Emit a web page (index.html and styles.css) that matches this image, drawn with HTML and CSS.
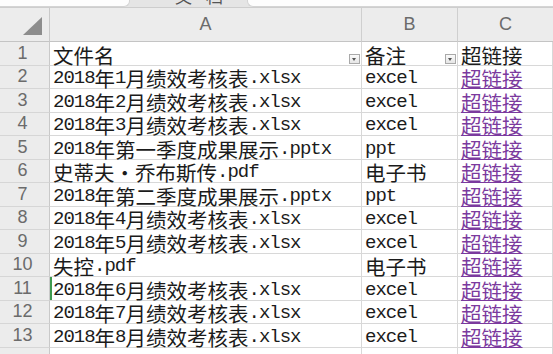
FILE: index.html
```html
<!DOCTYPE html>
<html lang="zh">
<head>
<meta charset="utf-8">
<link rel="stylesheet" href="styles.css">
</head>
<body>
<div class="tabs">
  <div class="tab-left"></div>
  <div class="tab-title">文档</div>
  <div class="tab-right"></div>
</div>
<div class="sheet">
  <div class="corner"><span class="tri"></span></div>
  <div class="colhead">A</div>
  <div class="colhead">B</div>
  <div class="colhead last">C</div>

  <div class="rowhead">1</div>
  <div class="cell">文件名<span class="filter"></span></div>
  <div class="cell">备注<span class="filter"></span></div>
  <div class="cell">超链接</div>

  <div class="rowhead">2</div>
  <div class="cell"><span class="lat">2018</span>年<span class="lat">1</span>月绩效考核表<span class="lat">.xlsx</span></div>
  <div class="cell"><span class="lat">excel</span></div>
  <div class="cell"><a class="link">超链接</a></div>

  <div class="rowhead">3</div>
  <div class="cell"><span class="lat">2018</span>年<span class="lat">2</span>月绩效考核表<span class="lat">.xlsx</span></div>
  <div class="cell"><span class="lat">excel</span></div>
  <div class="cell"><a class="link">超链接</a></div>

  <div class="rowhead">4</div>
  <div class="cell"><span class="lat">2018</span>年<span class="lat">3</span>月绩效考核表<span class="lat">.xlsx</span></div>
  <div class="cell"><span class="lat">excel</span></div>
  <div class="cell"><a class="link">超链接</a></div>

  <div class="rowhead">5</div>
  <div class="cell"><span class="lat">2018</span>年第一季度成果展示<span class="lat">.pptx</span></div>
  <div class="cell"><span class="lat">ppt</span></div>
  <div class="cell"><a class="link">超链接</a></div>

  <div class="rowhead">6</div>
  <div class="cell">史蒂夫・乔布斯传<span class="lat">.pdf</span></div>
  <div class="cell">电子书</div>
  <div class="cell"><a class="link">超链接</a></div>

  <div class="rowhead">7</div>
  <div class="cell"><span class="lat">2018</span>年第二季度成果展示<span class="lat">.pptx</span></div>
  <div class="cell"><span class="lat">ppt</span></div>
  <div class="cell"><a class="link">超链接</a></div>

  <div class="rowhead">8</div>
  <div class="cell"><span class="lat">2018</span>年<span class="lat">4</span>月绩效考核表<span class="lat">.xlsx</span></div>
  <div class="cell"><span class="lat">excel</span></div>
  <div class="cell"><a class="link">超链接</a></div>

  <div class="rowhead">9</div>
  <div class="cell"><span class="lat">2018</span>年<span class="lat">5</span>月绩效考核表<span class="lat">.xlsx</span></div>
  <div class="cell"><span class="lat">excel</span></div>
  <div class="cell"><a class="link">超链接</a></div>

  <div class="rowhead">10</div>
  <div class="cell">失控<span class="lat">.pdf</span></div>
  <div class="cell">电子书</div>
  <div class="cell"><a class="link">超链接</a></div>

  <div class="rowhead">11</div>
  <div class="cell selected"><span class="lat">2018</span>年<span class="lat">6</span>月绩效考核表<span class="lat">.xlsx</span></div>
  <div class="cell"><span class="lat">excel</span></div>
  <div class="cell"><a class="link">超链接</a></div>

  <div class="rowhead">12</div>
  <div class="cell"><span class="lat">2018</span>年<span class="lat">7</span>月绩效考核表<span class="lat">.xlsx</span></div>
  <div class="cell"><span class="lat">excel</span></div>
  <div class="cell"><a class="link">超链接</a></div>

  <div class="rowhead">13</div>
  <div class="cell"><span class="lat">2018</span>年<span class="lat">8</span>月绩效考核表<span class="lat">.xlsx</span></div>
  <div class="cell"><span class="lat">excel</span></div>
  <div class="cell"><a class="link">超链接</a></div>

  <div class="rowhead"></div>
  <div class="cell"></div>
  <div class="cell"></div>
  <div class="cell"></div>
</div>
</body>
</html>
```

FILE: styles.css
```css
html, body {
  margin: 0;
  padding: 0;
  background: #ffffff;
  overflow: hidden;
}
body {
  width: 553px;
  height: 354px;
}
.tabs {
  height: 7px;
  background: #e5e5e5;
  border-bottom: 1px solid #cdcdcd;
  display: flex;
  overflow: hidden;
}
.tab-left {
  width: 130px;
  background: #fdfdfd;
  border-bottom-right-radius: 6px;
  border-right: 1px solid #d4d4d4;
  border-bottom: 1px solid #d4d4d4;
  box-sizing: border-box;
}
.tab-title {
  width: 117px;
  font-family: "Noto Sans CJK SC", sans-serif;
  font-size: 17px;
  line-height: 17px;
  letter-spacing: 14px;
  color: #555;
  padding-left: 45px;
  box-sizing: border-box;
  margin-top: -13px;
  white-space: nowrap;
}
.tab-right {
  flex: 1;
  background: #fdfdfd;
  border-left: 1px solid #d4d4d4;
  border-bottom: 1px solid #d4d4d4;
  border-bottom-left-radius: 6px;
}
.sheet {
  display: grid;
  grid-template-columns: 50px 312px 96px 1fr;
  grid-template-rows: 34px repeat(14, 23.5px);
}
.corner {
  background: #ececec;
  border-right: 1px solid #c9c9c9;
  border-bottom: 1px solid #c4c4c4;
  position: relative;
}
.tri {
  position: absolute;
  left: 23px;
  top: 9px;
  width: 0;
  height: 0;
  border-left: 19px solid transparent;
  border-bottom: 18px solid #8d8d8d;
}
.colhead {
  background: #ececec;
  border-right: 1px solid #cfcfcf;
  border-bottom: 1px solid #c4c4c4;
  display: flex;
  align-items: center;
  justify-content: center;
  font-family: "Liberation Sans", Arial, sans-serif;
  font-size: 18px;
  color: #6b6b6b;
}
.colhead.last {
  border-right: none;
}
.rowhead {
  background: #ececec;
  border-right: 1px solid #c9c9c9;
  border-bottom: 1px solid #d6d6d6;
  display: flex;
  align-items: center;
  justify-content: center;
  padding-right: 4px;
  font-family: "Liberation Sans", Arial, sans-serif;
  font-size: 18px;
  color: #6b6b6b;
  box-sizing: border-box;
}
.cell {
  border-right: 1px solid #d8d8d8;
  border-bottom: 1px solid #d8d8d8;
  display: flex;
  align-items: center;
  padding-left: 3px;
  padding-top: 3px;
  font-family: "Noto Sans CJK SC", sans-serif;
  font-size: 20.5px;
  line-height: 20px;
  color: #1b1b1b;
  white-space: nowrap;
  box-sizing: border-box;
  min-width: 0;
}
.lat {
  font-family: "Liberation Mono", monospace;
  font-size: 19px;
  letter-spacing: -1px;
}
.cell.selected {
  box-shadow: inset 2px 0 0 #3f9a4f;
}
.filter {
  margin-left: auto;
  margin-right: 1px;
  align-self: flex-end;
  margin-bottom: 1px;
  width: 9px;
  height: 8px;
  border: 1px solid #a9a9a9;
  background: #f4f4f4 linear-gradient(#fafafa, #e6e6e6);
  position: relative;
  flex: none;
}
.filter::after {
  content: "";
  position: absolute;
  left: 2px;
  top: 3px;
  border-left: 2.5px solid transparent;
  border-right: 2.5px solid transparent;
  border-top: 3px solid #555;
}
.link {
  color: #7b3a9e;
  text-decoration: underline;
  text-underline-offset: 1px;
  text-decoration-thickness: 1px;
}
```
